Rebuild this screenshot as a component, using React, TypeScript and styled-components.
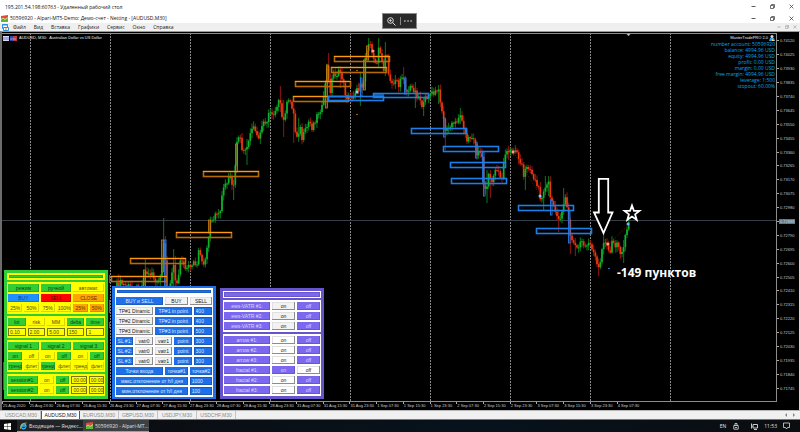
import React from "react";
import styled, { createGlobalStyle } from "styled-components";

const GlobalStyle = createGlobalStyle`
  * { box-sizing: border-box; }
  html, body { margin: 0; padding: 0; background: #000; }
  body { font-family: "Open Sans", "Noto Sans", sans-serif; overflow: hidden; }
  button, input { margin: 0; padding: 0; border: 0; border-radius: 0; font: inherit; color: inherit; background: none; min-width: 0; }
`;

/* ---------- window shell ---------- */

const Desktop = styled.div`
  position: relative;
  display: flex;
  flex-direction: column;
  min-height: 100vh;
`;

const TitleBar = styled.header<{ $h: number; $pad: number }>`
  display: flex;
  align-items: center;
  gap: 2px;
  height: ${(p) => p.$h}px;
  padding: 0 6px 0 ${(p) => p.$pad}px;
  background: #fff;
  color: #111;
  font-size: 5px;
  line-height: 8px;
  white-space: nowrap;
`;

const TitleText = styled.span`
  flex: 1;
`;

const WindowButtons = styled.div<{ $faded?: boolean }>`
  display: flex;
  align-items: center;
  gap: ${(p) => (p.$faded ? 4 : 14)}px;
  color: ${(p) => (p.$faded ? "#999" : "#333")};
`;

const IconButton = styled.button`
  display: flex;
  align-items: center;
  justify-content: center;
`;

const MenuBar = styled.nav`
  display: flex;
  align-items: center;
  height: 8px;
  padding: 0 3px 0 2px;
  gap: 8px;
  background: #efefef;
  color: #222;
  font-size: 5px;
  line-height: 8px;
`;

const MenuSpacer = styled.span`
  flex: 1;
`;

const MenuLead = styled.span`
  display: flex;
  margin-right: -4px;
`;

const ZoomToolbar = styled.div`
  position: absolute;
  top: 13px;
  left: 50%;
  width: 35px;
  height: 16px;
  margin-left: -18px;
  display: flex;
  align-items: center;
  justify-content: space-evenly;
  background: #2a2a2a;
  border: 1px solid #8a8a8a;
  color: #ddd;
`;

const ToolbarRule = styled.span`
  width: 1px;
  height: 8px;
  background: #888;
`;

/* ---------- chart ---------- */

const ChartFrame = styled.main`
  flex: 1;
  display: grid;
  grid-template-columns: minmax(0, 1fr) 22px;
  grid-template-rows: minmax(0, 1fr) 8px;
  border-top: 1px solid #9a9a9a;
  border-left: 2px solid #6c6c6c;
  border-right: 1px solid #d8d8d8;
  background: #000;
  padding-top: 1px;
`;

const Plot = styled.section`
  position: relative;
  border: solid #8c8c8c;
  border-width: 1px 1px 1px 0;
`;

const PlotSvg = styled.svg`
  position: absolute;
  inset: 0;
  width: 100%;
  height: 100%;
`;

const ChartCaption = styled.div`
  position: absolute;
  top: 1px;
  left: 1px;
  display: flex;
  align-items: center;
  gap: 2px;
  color: #eee;
  font: 4px/6px "Liberation Sans", sans-serif;
  white-space: nowrap;
`;

const AccountInfo = styled.div`
  position: absolute;
  top: 1px;
  right: 1px;
  display: flex;
  flex-direction: column;
  align-items: flex-end;
  color: #0aa4e8;
  font: 5px/6px "Open Sans", "Noto Sans", sans-serif;
  white-space: nowrap;
`;

const ExpertName = styled.div`
  display: flex;
  align-items: center;
  gap: 1px;
  color: #eee;
  font: 4px/6px "Liberation Sans", sans-serif;
`;

const PriceAxis = styled.ol`
  display: flex;
  flex-direction: column;
  margin: 0;
  padding: 1px 0 7px;
  list-style: none;
  color: #ccc;
  font: 4px/5px "Liberation Sans", sans-serif;
`;

const Price = styled.li<{ $current?: boolean }>`
  flex: 1;
  display: flex;
  align-items: center;
  &::before {
    content: "";
    width: 2px;
    height: 1px;
    background: #aaa;
  }
  span {
    padding: 0 1px;
    background: ${(p) => (p.$current ? "#64788a" : "none")};
    color: ${(p) => (p.$current ? "#c8d8e4" : "inherit")};
  }
`;

const TimeAxis = styled.ol`
  display: grid;
  grid-template-columns: repeat(29, minmax(0, 1fr));
  margin: 0;
  padding: 0;
  list-style: none;
  color: #ccc;
  font: 4px/7px "Liberation Sans", sans-serif;
  white-space: nowrap;
`;

const Time = styled.li`
  &::before {
    content: "";
    float: left;
    width: 1px;
    height: 2px;
    background: #aaa;
  }
`;

/* ---------- trade panels ---------- */

type Theme = "green" | "blue" | "violet";
const panelColor = { green: "#32cd32", blue: "#1e70ea", violet: "#6654cc" };
const groupColor = { green: "#ffff00", blue: "#ffffff", violet: "#ffffff" };
const cellColor = { green: "#32cd32", blue: "#1e70ea", violet: "#7b68ee" };

const PanelRow = styled.div`
  position: absolute;
  left: 2px;
  bottom: 2px;
  display: flex;
  align-items: flex-end;
  gap: 4px;
`;

const Panel = styled.section<{ $theme: Theme }>`
  display: flex;
  flex-direction: column;
  gap: ${(p) => (p.$theme === "blue" ? 0 : 2)}px;
  width: 104px;
  padding: ${(p) => (p.$theme === "blue" ? 2 : 3)}px 3px;
  background: ${(p) => panelColor[p.$theme]};
  font: 5px/6px "Liberation Sans", sans-serif;
`;

const Handle = styled.div<{ $theme: Theme }>`
  height: 7px;
  border: ${(p) => (p.$theme === "violet" ? 1 : 2)}px solid ${(p) => groupColor[p.$theme]};
  background: ${(p) => cellColor[p.$theme]};
  box-shadow: inset 0 0 0 1px rgba(0, 0, 0, 0.15);
`;

const Group = styled.div<{ $theme: Theme }>`
  display: flex;
  flex-direction: column;
  gap: 2px;
  padding: 2px 1px;
  background: ${(p) => groupColor[p.$theme]};
`;

const Line = styled.div<{ $cols: string }>`
  display: grid;
  grid-template-columns: ${(p) => p.$cols};
  gap: 2px;
  height: 8px;
`;

type Tone = "green" | "yellow" | "blue" | "sky" | "red" | "orange" | "light" | "white" | "violet";
const tones: Record<Tone, [string, string]> = {
  green: ["#32cd32", "#103c16"],
  yellow: ["#ffff00", "#4c4a10"],
  blue: ["#1e70ea", "#dce8ff"],
  sky: ["#1e90ff", "#163a78"],
  red: ["#ff0000", "#5a0606"],
  orange: ["#ffa500", "#5a3600"],
  light: ["#f2f2f2", "#222"],
  white: ["#ffffff", "#222"],
  violet: ["#7b68ee", "#dcd6ff"],
};

const Key = styled.button<{ $tone: Tone }>`
  height: 8px;
  overflow: hidden;
  white-space: nowrap;
  text-align: center;
  background: ${(p) => tones[p.$tone][0]};
  color: ${(p) => tones[p.$tone][1]};
  box-shadow: ${(p) =>
    p.$tone === "light" || p.$tone === "white"
      ? "inset -1px -1px 0 #8c8c8c, inset 1px 1px 0 #e0e0e0"
      : "inset -1px -1px 0 rgba(0, 0, 0, 0.16)"};
`;

const Field = styled.input<{ $theme: Theme }>`
  width: 100%;
  height: 8px;
  padding-left: 1px;
  background: ${(p) => (p.$theme === "green" ? "#ffff00" : "#1e70ea")};
  color: ${(p) => (p.$theme === "green" ? "#4a4810" : "#dce8ff")};
  border: 1px solid ${(p) => (p.$theme === "green" ? "#77750c" : "#1858c0")};
`;

/* ---------- bottom bars ---------- */

const ChartTabs = styled.div`
  display: flex;
  height: 10px;
  border-top: 1px solid #b8b8b8;
  border-bottom: 1px solid #777;
  padding: 0 4px 0 2px;
  background: #f0f0f0;
  color: #8a8a8a;
  font: 5px/8px "Liberation Sans", sans-serif;
`;

const ChartTab = styled.button<{ $active?: boolean }>`
  width: 39px;
  background: ${(p) => (p.$active ? "#fff" : "none")};
  color: ${(p) => (p.$active ? "#111" : "inherit")};
  border-right: 1px solid ${(p) => (p.$active ? "#555" : "#c4c4c4")};
  border-left: ${(p) => (p.$active ? "1px solid #555" : "0")};
`;

const Taskbar = styled.footer`
  display: flex;
  align-items: stretch;
  height: 12px;
  background: linear-gradient(90deg, #0c0c0e, #07121c 60%, #0b0d10);
  color: #e0e0e0;
  font-size: 5px;
  line-height: 10px;
`;

const StartButton = styled.button`
  width: 17px;
  display: flex;
  align-items: center;
  padding-left: 4px;
`;

const TaskButton = styled.button<{ $active?: boolean }>`
  display: flex;
  align-items: center;
  gap: 2px;
  width: 66px;
  padding-left: 3px;
  white-space: nowrap;
  overflow: hidden;
  background: ${(p) => (p.$active ? "#3d4144" : "#202427")};
  border-bottom: 1px solid #76a9d4;
`;

const Tray = styled.div`
  display: flex;
  align-items: center;
  gap: 6px;
  margin-left: auto;
  padding-right: 10px;
`;

const TrayGroup = styled.div`
  display: flex;
  align-items: center;
  gap: 7px;
  margin-right: 6px;
`;

/* ---------- icons ---------- */

const MinIcon = ({ s = 5 }: { s?: number }) => (
  <svg width={s} height={s} viewBox="0 0 5 5"><path d="M.5 2.5h4" stroke="currentColor" strokeWidth=".8" /></svg>
);
const RestoreIcon = ({ s = 5 }: { s?: number }) => (
  <svg width={s} height={s} viewBox="0 0 5 5" fill="none" stroke="currentColor" strokeWidth=".7">
    <path d="M.5 1.5h3v3h-3zM1.5 1.4V.5h3v3h-.9" />
  </svg>
);
const CloseIcon = ({ s = 5 }: { s?: number }) => (
  <svg width={s} height={s} viewBox="0 0 5 5"><path d="M.6.6l3.8 3.8M4.4.6L.6 4.4" stroke="currentColor" strokeWidth=".7" /></svg>
);
const AppIcon = () => (
  <svg width="7" height="7" viewBox="0 0 7 7">
    <path d="M0 1l7-1v3L4 4 2 3 0 4z" fill="#e3483c" />
    <path d="M0 4l2-1.500 2 1.500 3-2v5H0z" fill="#5fb53a" />
    <path d="M0 4.500l2-1.500 2 1.500 3-2" stroke="#fff2b0" strokeWidth=".6" fill="none" />
  </svg>
);
const ChartIcon = () => (
  <svg width="7" height="7" viewBox="0 0 7 7">
    <path d="M.5.5h5v4h-5z" fill="#fff" stroke="#2f8fdd" />
    <path d="M1.5 3.500h5v3h-5z" fill="#fff" stroke="#2f8fdd" />
    <path d="M0 1h6" stroke="#2f8fdd" /><path d="M3 5h2" stroke="#e27a4a" />
  </svg>
);

const WindowControls = ({ faded }: { faded?: boolean }) => (
  <WindowButtons $faded={faded}>
    <IconButton aria-label="Свернуть"><MinIcon s={faded ? 4 : 5} /></IconButton>
    <IconButton aria-label="Восстановить"><RestoreIcon s={faded ? 4 : 5} /></IconButton>
    <IconButton aria-label="Закрыть"><CloseIcon s={faded ? 4 : 5} /></IconButton>
  </WindowButtons>
);

/* ---------- chart data ---------- */

const trend: number[][] = [
  [117, 286], [120, 283], [126, 286], [136, 288], [142, 286], [144, 272], [146, 272], [149, 275], [152, 272], [156, 285],
  [160, 280], [162, 262], [163, 241], [165, 255], [167, 290], [171, 284], [173, 262], [176, 285], [179, 270], [181, 256],
  [183, 263], [187, 268], [190, 266], [193, 262], [197, 267], [199, 250], [202, 264], [205, 261], [208, 242], [210, 221],
  [213, 223], [216, 214], [218, 219], [221, 206], [223, 192], [226, 185], [230, 176], [233, 191], [235, 175], [236, 146],
  [240, 138], [243, 155], [245, 148], [248, 150], [250, 132], [253, 128], [256, 134], [258, 142], [261, 130], [264, 121],
  [267, 120], [270, 112], [274, 113], [278, 101], [281, 108], [283, 126], [286, 106], [290, 101], [293, 108], [296, 138],
  [300, 127], [302, 139], [306, 130], [309, 121], [312, 127], [316, 118], [320, 109], [323, 107], [325, 85], [327, 67],
  [330, 92], [333, 74], [337, 74], [341, 72], [343, 82], [346, 96], [349, 98], [353, 96], [356, 89], [358, 93], [361, 78],
  [363, 91], [365, 60], [367, 48], [371, 47], [374, 60], [377, 60], [379, 45], [381, 60], [384, 69], [386, 48], [388, 70],
  [390, 83], [393, 84], [396, 77], [399, 87], [402, 76], [404, 77], [406, 93], [410, 88], [414, 89], [417, 95], [420, 98],
  [423, 108], [426, 97], [430, 94], [434, 94], [438, 90], [440, 97], [443, 117], [446, 132], [449, 128], [453, 124],
  [456, 122], [459, 116], [462, 118], [465, 132], [467, 143], [470, 136], [473, 136], [475, 144], [478, 156], [480, 149],
  [482, 158], [484, 190], [487, 188], [489, 169], [491, 184], [494, 178], [496, 166], [499, 173], [502, 178], [504, 158],
  [507, 152], [512, 151], [517, 151], [520, 163], [522, 167], [524, 180], [526, 165], [529, 166], [533, 176], [537, 185],
  [541, 198], [544, 188], [546, 189], [549, 182], [551, 204], [554, 205], [557, 213], [560, 224], [563, 208], [565, 194],
  [567, 208], [569, 224], [571, 241], [574, 243], [577, 248], [581, 241], [585, 249], [589, 244], [592, 247], [595, 256],
  [598, 271], [601, 258], [603, 240], [606, 241], [609, 253], [612, 244], [617, 245], [620, 251], [623, 253], [625, 234],
  [628, 230], [629, 220],
];

const spikes: Record<number, [number, number]> = {
  119: [274, 287], 146: [258, 276], 163: [218, 244], 165: [236, 288], 173: [249, 290], 176: [256, 288], 233: [185, 200],
  247: [139, 165], 281: [86, 112], 283: [100, 137], 294: [112, 143], 298: [118, 140], 328: [53, 72], 341: [68, 88],
  361: [72, 106], 368: [38, 62], 378: [38, 62], 386: [42, 76], 403: [67, 84], 416: [82, 108], 424: [98, 116], 439: [85, 104],
  445: [118, 150], 461: [108, 124], 487: [170, 203], 491: [170, 198], 509: [146, 160], 525: [168, 190], 543: [190, 210],
  546: [176, 190], 549: [176, 196], 559: [210, 232], 564: [188, 206], 571: [225, 254], 576: [238, 256], 599: [262, 276],
  623: [240, 263], 603: [234, 252],
};

type Candle = { x: number; open: number; close: number; high: number; low: number };

const noise = (n: number) => {
  const v = Math.sin(n * 12.9898) * 43758.5453;
  return v - Math.floor(v) - 0.5;
};

function buildCandles(points: number[][]): Candle[] {
  const out: Candle[] = [];
  const step = 5 / 3;
  const last = points[points.length - 1][0];
  let prev = points[0][1];
  let k = 0;
  for (let i = 0; points[0][0] + i * step <= last; i++) {
    const x = points[0][0] + i * step;
    while (k < points.length - 2 && points[k + 1][0] < x) k++;
    const [x0, y0] = points[k];
    const [x1, y1] = points[k + 1];
    const close = y0 + ((y1 - y0) * (x - x0)) / (x1 - x0) + noise(i) * 7;
    let high = Math.min(prev, close) - 1 - Math.abs(noise(i + 300)) * 9;
    let low = Math.max(prev, close) + 1 + Math.abs(noise(i + 700)) * 9;
    for (const key of Object.keys(spikes)) {
      if (Math.abs(Number(key) - x) < step / 2) {
        high = Math.min(high, spikes[Number(key)][0]);
        low = Math.max(low, spikes[Number(key)][1]);
      }
    }
    out.push({ x, open: prev, close, high, low });
    prev = close;
  }
  return out;
}

const candles = buildCandles(trend);

const orangeZones = [
  [334, 56], [331, 67], [295, 81], [293, 96], [203, 171], [176, 232], [130, 258], [111, 276],
];
const blueZones = [
  [328, 96], [373, 93], [411, 128], [443, 146], [450, 162], [451, 178], [518, 205], [536, 228],
];
const orangeBars = [
  [161, 240, 32], [143, 270, 18], [208, 220, 13], [235, 144, 28], [325, 81, 27], [326, 65, 16], [363, 60, 30], [366, 46, 14],
];
const blueBars = [
  [164, 240, 46], [360, 78, 18], [404, 78, 16], [443, 118, 19], [475, 142, 16], [482, 152, 30], [483, 182, 14], [550, 200, 15],
  [568, 212, 31],
];
const gridX = [30, 110, 190, 270, 350, 430, 510, 590, 670];

const PriceChart = () => (
  <PlotSvg viewBox="2 34 774 367" preserveAspectRatio="none" role="img" aria-label="AUDUSD, M30">
    {gridX.map((x) => (
      <path key={x} d={`M${x + 0.5} 33V401`} stroke="#868686" strokeWidth="1" strokeDasharray="2 1" />
    ))}
    <path d="M2 220.500H777" stroke="#36404a" strokeWidth="1" />
    <path d="M3.500 362v12M3.500 368v22" stroke="#0a8a20" />
    <path d="M109.500 275v8M109.500 300v5M109.500 322v6" stroke="#c03010" />
    <path d="M109.500 305v8" stroke="#0a8a20" />
    {candles.map((c, i) => {
      const up = c.close < c.open;
      return (
        <g key={i}>
          <path d={`M${c.x} ${c.high}V${c.low}`} stroke={up ? "#0a7a1a" : "#981410"} strokeWidth="1" />
          <path
            d={`M${c.x} ${Math.min(c.open, c.close)}v${Math.max(1, Math.abs(c.open - c.close))}`}
            stroke={up ? "#0cb42e" : "#ec3a0c"}
            strokeWidth="1.700"
          />
        </g>
      );
    })}
    {orangeBars.map(([x, y, h], i) => (
      <rect key={i} x={x + 0.5} y={y} width="2" height={h} fill="#8a4c00" stroke="#d07a08" strokeWidth=".8" fillOpacity=".5" />
    ))}
    {blueBars.map(([x, y, h], i) => (
      <rect key={i} x={x + 0.5} y={y} width="1.500" height={h} fill="none" stroke="#2878e0" strokeWidth=".9" />
    ))}
    <rect x="374" y="94" width="10" height="4" fill="#14549c" />
    {orangeZones.map(([x, y], i) => (
      <g key={i} fill="none">
        <rect x={x + 0.5} y={y + 0.5} width="55" height="5" stroke="#b86a06" strokeWidth="1.600" />
        <path d={`M${x} ${y + 0.5}h56`} stroke="#ff9a10" />
      </g>
    ))}
    {blueZones.map(([x, y], i) => (
      <rect key={i} x={x + 0.5} y={y + 0.5} width="55" height={i < 2 ? 4 : 5} fill="none" stroke="#1c7ee8" strokeWidth="1.600" />
    ))}
    {[[373, 51, "#ff9a8a"], [608, 244, "#ff9a8a"], [513, 152, "#e0a8a0"], [357, 92, "#9ccfff"], [540, 196, "#8cc0ff"], [628, 224, "#6cb4ff"]].map(
      ([x, y, c], i) => <circle key={i} cx={x} cy={y} r="1.500" fill={String(c)} />,
    )}
    <path d="M356 70.500h2M356 114.500h2" stroke="#a86000" />
    <path d="M514 153L540 195M610 243L628 225" stroke="#8a2a10" strokeWidth=".7" strokeDasharray="1 1.500" />
    <path d="M608 268.500h2" stroke="#1e70d0" />
    <path d="M626.500 34h4l-2 2z" fill="#b8c8d8" />
    <path d="M598.800 178.800h9.400v33.700h4.300l-9 20.500-9.500-20.500h4.800z" fill="#000" stroke="#fff" strokeWidth="1.800" />
    <path d="M632 205.500l1.900 5.300 5.600.1-4.400 3.500 1.600 5.400-4.700-3.200-4.700 3.200 1.600-5.400-4.400-3.500 5.600-.1z" fill="#000" stroke="#fff" strokeWidth="1.800" />
    <text x="617" y="277" fill="#fff" fontFamily="Open Sans, Noto Sans, sans-serif" fontWeight="700" fontSize="12">-149 пунктов</text>
  </PlotSvg>
);

const times = [
  "25 Aug 2020", "25 Aug 23:30", "26 Aug 07:30", "26 Aug 15:30", "26 Aug 23:30", "27 Aug 07:30", "27 Aug 15:30", "27 Aug 23:30",
  "28 Aug 07:30", "28 Aug 15:30", "28 Aug 23:30", "31 Aug 07:30", "31 Aug 15:30", "31 Aug 23:30", "1 Sep 07:30", "1 Sep 15:30",
  "1 Sep 23:30", "2 Sep 07:30", "2 Sep 15:30", "2 Sep 23:30", "3 Sep 07:30", "3 Sep 15:30", "3 Sep 23:30", "4 Sep 07:30",
];
const prices = Array.from({ length: 26 }, (_, i) => (i === 13 ? "0.72888" : (0.7412 - i * 0.00095).toFixed(5)));

/* ---------- panels ---------- */

type KeySpec = [string, Tone];
const Keys = ({ cols, keys }: { cols: string; keys: KeySpec[] }) => (
  <Line $cols={cols}>
    {keys.map(([label, tone], i) => (
      <Key key={i} $tone={tone}>{label}</Key>
    ))}
  </Line>
);

const three = "repeat(3, minmax(0, 1fr))";
const five = "repeat(5, minmax(0, 1fr))";
const six = "repeat(6, minmax(0, 1fr))";

const GreenPanel = () => (
  <Panel $theme="green">
    <Handle $theme="green" />
    <Group $theme="green">
      <Keys cols={three} keys={[["режим", "green"], ["ручной", "green"], ["автомат.", "yellow"]]} />
      <Keys cols={three} keys={[["BUY", "sky"], ["SELL", "red"], ["CLOSE", "orange"]]} />
      <Keys cols={six} keys={[["25%", "yellow"], ["50%", "yellow"], ["75%", "yellow"], ["100%", "yellow"], ["25%", "orange"], ["50%", "orange"]]} />
    </Group>
    <Group $theme="green">
      <Keys cols={five} keys={[["lot", "green"], ["risk", "yellow"], ["MM", "yellow"], ["delta", "green"], ["time", "green"]]} />
      <Line $cols={five}>
        {[["lot", "0.10"], ["risk", "2.00"], ["MM", "5.00"], ["delta", "150"], ["time", "1"]].map(([name, v]) => (
          <Field key={name} $theme="green" aria-label={name} defaultValue={v} />
        ))}
      </Line>
    </Group>
    <Group $theme="green">
      <Keys cols={three} keys={[["signal 1", "green"], ["signal 2", "green"], ["signal 3", "green"]]} />
      <Keys cols={six} keys={[["on", "green"], ["off", "yellow"], ["on", "yellow"], ["off", "green"], ["on", "yellow"], ["off", "green"]]} />
      <Keys cols={six} keys={[["тренд", "green"], ["флет", "yellow"], ["тренд", "green"], ["флет", "yellow"], ["тренд", "yellow"], ["флет", "yellow"]]} />
    </Group>
    <Group $theme="green">
      {["session#1:", "session#2:"].map((s) => (
        <Line key={s} $cols="31fr 15fr 14fr 16fr 16fr">
          <Key $tone="green">{s}</Key>
          <Key $tone="yellow">on</Key>
          <Key $tone="green">off</Key>
          <Field $theme="green" aria-label={s + " начало"} defaultValue="00:00" />
          <Field $theme="green" aria-label={s + " конец"} defaultValue="00:00" />
        </Line>
      ))}
    </Group>
  </Panel>
);

const BluePanel = () => (
  <Panel $theme="blue">
    <Handle $theme="blue" />
    <Group $theme="blue">
      <Keys cols="47fr 23fr 22fr" keys={[["BUY и SELL", "blue"], ["BUY", "light"], ["SELL", "light"]]} />
      {[["1", "400"], ["2", "400"], ["3", "500"]].map(([n, v]) => (
        <Line key={n} $cols="36fr 36fr 18fr">
          <Key $tone="light">TP#{n} Dinamic</Key>
          <Key $tone="blue">TP#{n} in point</Key>
          <Field $theme="blue" aria-label={`TP#${n}`} defaultValue={v} />
        </Line>
      ))}
      {["1", "2", "3"].map((n) => (
        <Line key={n} $cols="17fr 17fr 17fr 17fr 18fr">
          <Key $tone="blue">SL #{n}:</Key>
          <Key $tone="light">vatr0</Key>
          <Key $tone="light">vatr1</Key>
          <Key $tone="blue">point</Key>
          <Field $theme="blue" aria-label={`SL #${n}`} defaultValue="300" />
        </Line>
      ))}
      <Keys cols="47fr 23fr 22fr" keys={[["Точки входа", "blue"], ["точка#1", "blue"], ["точка#2", "blue"]]} />
      {[["макс.отклонение от h/l дня", "1000"], ["мин.отклонение от h/l дня", "100"]].map(([label, v]) => (
        <Line key={label} $cols="71fr 22fr">
          <Key $tone="blue">{label}</Key>
          <Field $theme="blue" aria-label={label} defaultValue={v} />
        </Line>
      ))}
    </Group>
  </Panel>
);

const VioletPanel = () => (
  <Panel $theme="violet">
    <Handle $theme="violet" />
    <Group $theme="violet">
      {["1", "2", "3"].map((n) => (
        <Keys key={n} cols="2fr 1fr 1fr" keys={[[`ews-VATR #${n}:`, "violet"], ["on", "light"], ["off", "violet"]]} />
      ))}
    </Group>
    <Group $theme="violet">
      {["arrow #1:", "arrow #2:", "arrow #3:", "fractal #1:", "fractal #2:", "fractal #3:"].map((s) => {
        const swapped = s === "fractal #1:";
        return (
          <Keys key={s} cols="2fr 1fr 1fr" keys={[[s, "violet"], ["on", swapped ? "violet" : "white"], ["off", swapped ? "white" : "violet"]]} />
        );
      })}
    </Group>
  </Panel>
);

/* ---------- page ---------- */

export default function App() {
  return (
    <Desktop>
      <GlobalStyle />
      <TitleBar $h={13} $pad={5}>
        <TitleText>195.201.54.198:60763 - Удаленный рабочий стол</TitleText>
        <WindowControls />
      </TitleBar>
      <TitleBar $h={10} $pad={1}>
        <AppIcon />
        <TitleText>50596920 - Alpari-MT5-Demo: Демо-счет - Netting - [AUDUSD,M30]</TitleText>
        <WindowControls />
      </TitleBar>
      <MenuBar>
        <MenuLead><ChartIcon /></MenuLead>
        {["Файл", "Вид", "Вставка", "Графики", "Сервис", "Окно", "Справка"].map((m) => (
          <button key={m}>{m}</button>
        ))}
        <MenuSpacer />
        <WindowControls faded />
      </MenuBar>

      <ChartFrame>
        <Plot>
          <PriceChart />
          <ChartCaption>
            <svg width="14" height="5" viewBox="0 0 14 5">
              <path d="M0 0h6v5H0z" fill="#d8d8f0" /><path d="M1 1v3M3 1v3M5 1v3" stroke="#5068d0" strokeWidth=".8" />
              <path d="M7 0h3v5H7z" fill="#3048b0" /><path d="M10 0h4v5h-4z" fill="#c03838" /><path d="M7 3h6" stroke="#d0d0f0" strokeWidth=".6" />
            </svg>
            <span>AUDUSD, M30: &nbsp;Australian Dollar vs US Dollar</span>
          </ChartCaption>
          <AccountInfo>
            <ExpertName>
              MasterTradePRO 2.0
              <svg width="6" height="6" viewBox="0 0 6 6">
                <circle cx="3" cy="1.500" r="1.500" fill="#d8d8d8" /><path d="M0 6l1-3h4l1 3z" fill="#3c9ce0" /><path d="M3 4l3 2H3z" fill="#ffe040" />
              </svg>
            </ExpertName>
            <div>number account: 50596920</div>
            <div>balance: 4994.96 USD</div>
            <div>equity: 4994.96 USD</div>
            <div>profit: 0.00 USD</div>
            <div>margin: 0.00 USD</div>
            <div>free margin: 4994.96 USD</div>
            <div>leverage: 1:500</div>
            <div>stopout: 60.00%</div>
          </AccountInfo>
          <PanelRow>
            <GreenPanel />
            <BluePanel />
            <VioletPanel />
          </PanelRow>
        </Plot>
        <PriceAxis>
          {prices.map((p, i) => (
            <Price key={p} $current={i === 13}><span>{p}</span></Price>
          ))}
        </PriceAxis>
        <TimeAxis>
          {times.map((t) => (
            <Time key={t}>{t}</Time>
          ))}
        </TimeAxis>
      </ChartFrame>

      <ChartTabs role="tablist">
        {["USDCAD,M30", "AUDUSD,M30", "EURUSD,M30", "GBPUSD,M30", "USDJPY,M30", "USDCHF,M30"].map((t, i) => (
          <ChartTab key={t} role="tab" aria-selected={i === 1} $active={i === 1}>{t}</ChartTab>
        ))}
        <MenuSpacer />
        <WindowButtons $faded>
          <IconButton aria-label="Назад"><svg width="4" height="4" viewBox="0 0 4 4"><path d="M3 0v4L1 2z" fill="#888" /></svg></IconButton>
          <IconButton aria-label="Вперёд"><svg width="4" height="4" viewBox="0 0 4 4"><path d="M1 0v4l2-2z" fill="#888" /></svg></IconButton>
        </WindowButtons>
      </ChartTabs>

      <Taskbar>
        <StartButton aria-label="Пуск">
          <svg width="7" height="7" viewBox="0 0 7 7" fill="#fff"><path d="M0 1l3-.5v2.700H0zM3.400.4L7 0v3.200H3.400zM0 3.700h3v2.800L0 6zM3.400 3.700H7V7l-3.600-.5z" /></svg>
        </StartButton>
        <TaskButton>
          <svg width="7" height="8" viewBox="0 0 7 8">
            <path d="M5.800 5.300A2.500 2.500 0 1 1 6 4H2" fill="none" stroke="#3ab4f0" strokeWidth="1.300" />
            <path d="M.5 7C-.5 5 4 .5 6.500 1" fill="none" stroke="#f0c040" strokeWidth=".8" />
          </svg>
          Входящие — Яндекс...
        </TaskButton>
        <TaskButton $active>
          <AppIcon />
          50596920 - Alpari-MT...
        </TaskButton>
        <Tray>
          <TrayGroup>
            <span>EN</span>
            <svg width="6" height="8" viewBox="0 0 6 8" fill="none" stroke="#ddd" strokeWidth=".8"><path d="M.8 3.500h4.400v3.700H.8zM2 3.500v-2h2v2M2 5.500h2" /></svg>
          </TrayGroup>
          <svg width="7" height="7" viewBox="0 0 7 7" fill="none" stroke="#ddd" strokeWidth=".9"><path d="M2 1.500h4.500v3.500H2zM.5.500v3h1M3 6.500h3M.5 3.500v2" /></svg>
          <span>11:53</span>
          <svg width="7" height="8" viewBox="0 0 7 8" fill="none" stroke="#ddd" strokeWidth=".8"><path d="M.5 1h6v4.500H4.500L3.500 7 2.500 5.500h-2z" /></svg>
        </Tray>
      </Taskbar>

      <ZoomToolbar>
        <IconButton aria-label="Масштаб">
          <svg width="9" height="9" viewBox="0 0 9 9" fill="none" stroke="currentColor"><circle cx="3.500" cy="3.500" r="2.800" /><path d="M5.600 5.600L8.500 8.500M2.300 3.500h2.400M3.500 2.300v2.400" /></svg>
        </IconButton>
        <ToolbarRule />
        <IconButton aria-label="Ещё">
          <svg width="8" height="2" viewBox="0 0 8 2" fill="currentColor"><path d="M0 .5h1.700v1H0zM3.200.5h1.700v1H3.200zM6.300.5H8v1H6.300z" /></svg>
        </IconButton>
      </ZoomToolbar>
    </Desktop>
  );
}
